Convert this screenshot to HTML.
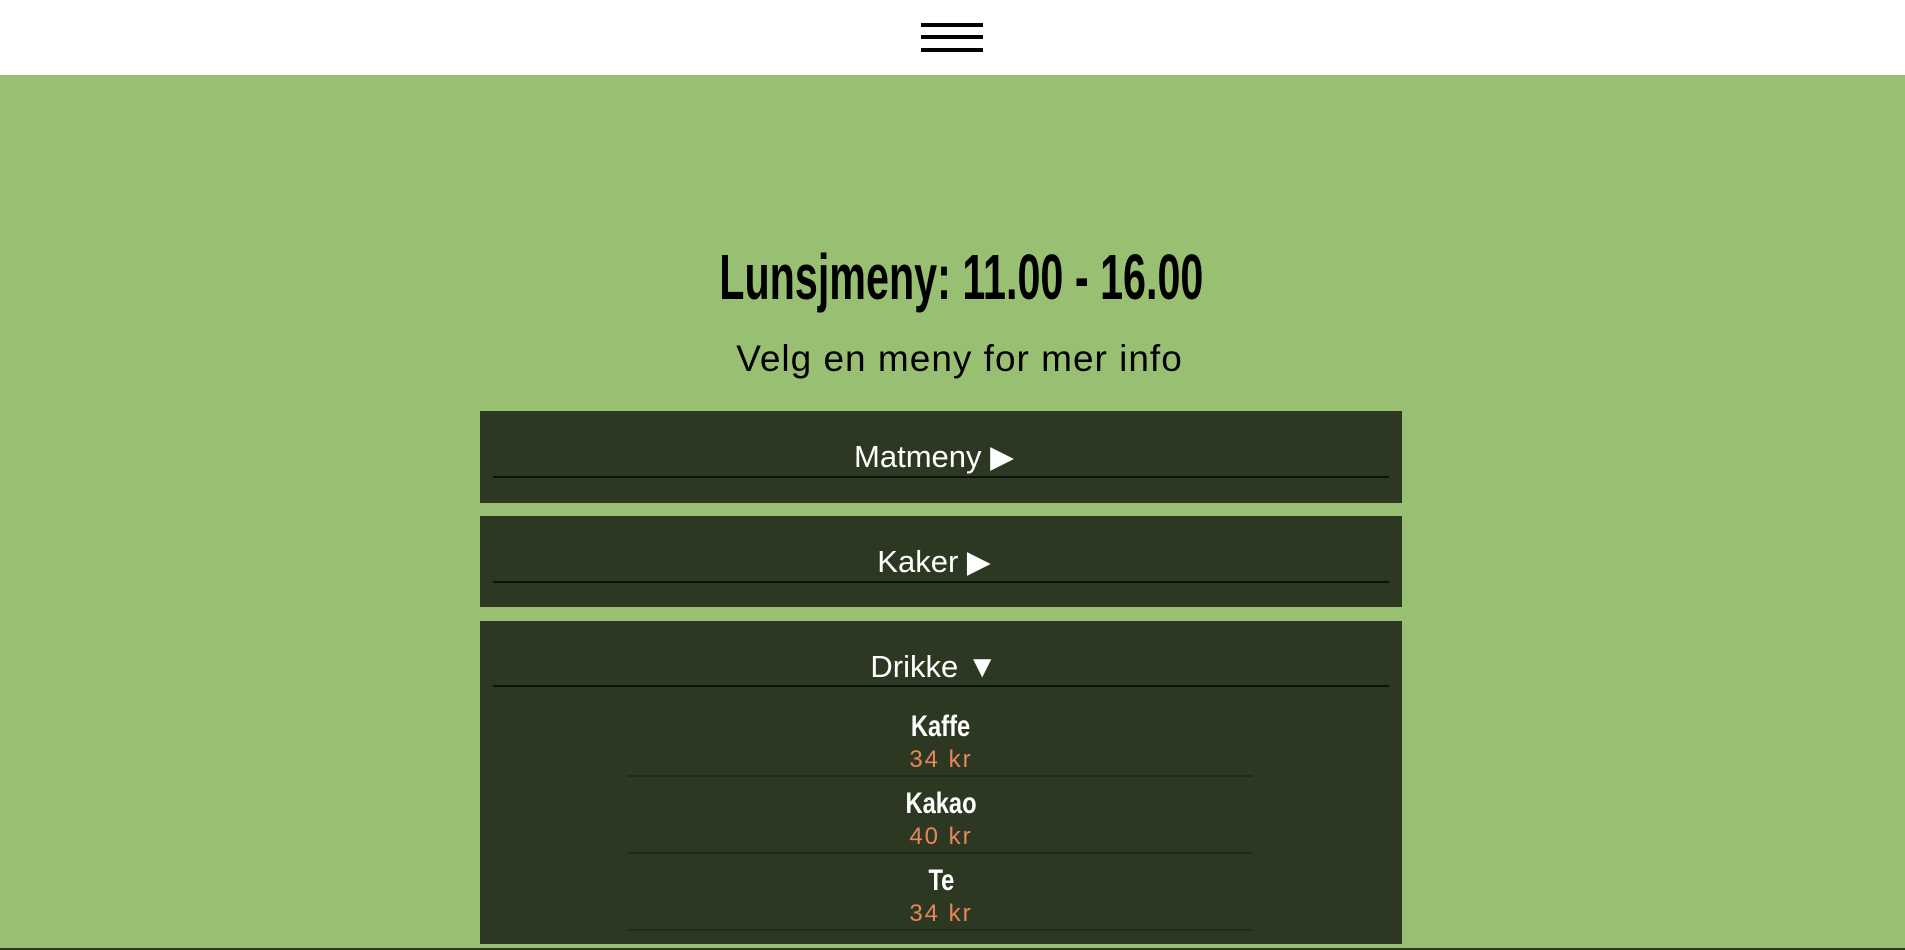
<!DOCTYPE html>
<html><head><meta charset="utf-8"><style>
*{margin:0;padding:0;box-sizing:border-box}
html,body{width:1905px;height:950px;overflow:hidden;background:#99bf73;font-family:"Liberation Sans",sans-serif}
.hdr{position:absolute;left:0;top:0;width:1905px;height:75px;background:#fff}
.bar{position:absolute;left:921px;width:62px;height:4px;background:#000}
.t{position:absolute;left:0;width:1905px;text-align:center;white-space:nowrap}
.sc{display:inline-block;transform-origin:center}
.panel{position:absolute;left:480px;width:922px;background:#2d3823}
.ln{position:absolute;left:13px;width:896px;height:2px;background:#0c1208}
.ph{position:absolute;left:-7px;width:922px;text-align:center;color:#fff;font-size:31px;line-height:1}
.it{position:absolute;left:0;width:922px;text-align:center;line-height:1}
.nm{color:#fff;font-weight:bold;font-size:30px}
.pr{color:#e8865a;font-size:24px;letter-spacing:2px}
.sep{position:absolute;left:147px;width:626px;height:2px;background:#222b1a}
</style></head><body>
<div class="hdr">
<div class="bar" style="top:23px"></div>
<div class="bar" style="top:35px"></div>
<div class="bar" style="top:48px"></div>
</div>
<div class="t" style="top:239px;left:9px;font-size:64px;font-weight:bold;line-height:1.2"><span class="sc" style="transform:scaleX(0.645)">Lunsjmeny: 11.00 - 16.00</span></div>
<div class="t" style="top:337px;left:7px;font-size:37px;letter-spacing:1px;line-height:1.2">Velg en meny for mer info</div>

<div class="panel" style="top:411px;height:92px">
<div class="ph" style="top:30px">Matmeny ▶</div>
<div class="ln" style="top:65px"></div>
</div>
<div class="panel" style="top:516px;height:91px">
<div class="ph" style="top:30px">Kaker ▶</div>
<div class="ln" style="top:65px"></div>
</div>
<div class="panel" style="top:621px;height:323px">
<div class="ph" style="top:30px">Drikke ▼</div>
<div class="ln" style="top:64px"></div>

<div class="it nm" style="top:91px"><span class="sc" style="transform:scaleX(0.79)">Kaffe</span></div>
<div class="it pr" style="top:127px">34 kr</div>
<div class="sep" style="top:154px"></div>

<div class="it nm" style="top:168px"><span class="sc" style="transform:scaleX(0.79)">Kakao</span></div>
<div class="it pr" style="top:204px">40 kr</div>
<div class="sep" style="top:231px"></div>

<div class="it nm" style="top:245px"><span class="sc" style="transform:scaleX(0.79)">Te</span></div>
<div class="it pr" style="top:281px">34 kr</div>
<div class="sep" style="top:308px"></div>
</div>
<div style="position:absolute;left:0;top:948px;width:1905px;height:2px;background:#2d3823"></div>
</body></html>
